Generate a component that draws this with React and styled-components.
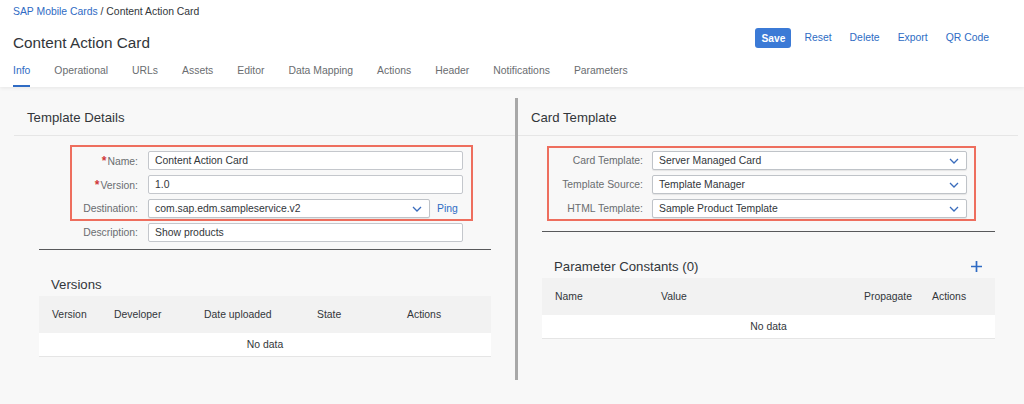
import React from "react";
import styled, { createGlobalStyle } from "styled-components";

const GlobalStyle = createGlobalStyle`
    html, body {
        margin: 0;
        padding: 0;
    }
    body {
        background: #f8f8f8;
        font-family: "Liberation Sans", Arial, sans-serif;
        color: #32363a;
    }
`

const tabs = ["Info", "Operational", "URLs", "Assets", "Editor", "Data Mapping", "Actions", "Header", "Notifications", "Parameters"]

function Chevron() {
    return (
        <svg width="10" height="6" viewBox="0 0 10 6">
            <path d="M1 1 L5 5 L9 1" fill="none" stroke="#3a6cbc" strokeWidth="1.3" />
        </svg>
    )
}

function PlusIcon() {
    return (
        <svg width="11" height="11" viewBox="0 0 11 11">
            <path d="M5.5 0 V11 M0 5.5 H11" stroke="#2f6bc4" strokeWidth="1.7" />
        </svg>
    )
}

function Field({ label, required, labelWidth, gap, fieldWidth, children }) {
    return (
        <FieldRow $labelWidth={labelWidth} $gap={gap} $fieldWidth={fieldWidth}>
            <Label>{required && <Required>*</Required>}{label}</Label>
            {children}
        </FieldRow>
    )
}

function SelectBox({ value, width }) {
    return (
        <Select $width={width}>
            <span>{value}</span>
            <Chevron />
        </Select>
    )
}

export default function App() {
    return (
        <>
            <GlobalStyle />
            <Header>
                <Breadcrumb>
                    <BreadcrumbLink>SAP Mobile Cards</BreadcrumbLink> / Content Action Card
                </Breadcrumb>
                <TitleRow>
                    <Title>Content Action Card</Title>
                    <HeaderActions>
                        <SaveButton>Save</SaveButton>
                        <LinkButton>Reset</LinkButton>
                        <LinkButton>Delete</LinkButton>
                        <LinkButton>Export</LinkButton>
                        <LinkButton>QR Code</LinkButton>
                    </HeaderActions>
                </TitleRow>
                <TabBar>
                    {tabs.map((tab, i) => (
                        <Tab key={tab} $active={i === 0}>{tab}</Tab>
                    ))}
                </TabBar>
            </Header>

            <Body>
                <Column $divider>
                    <SectionHeader>Template Details</SectionHeader>
                    <HighlightBox $left={56} $width={403} $top={9} $padding="4px 8px 1px 0">
                        <Field label="Name:" required labelWidth={66} gap={10} fieldWidth={315}>
                            <Input>Content Action Card</Input>
                        </Field>
                        <Field label="Version:" required labelWidth={66} gap={10} fieldWidth={315}>
                            <Input>1.0</Input>
                        </Field>
                        <Field label="Destination:" labelWidth={66} gap={10} fieldWidth={315}>
                            <FieldWithLink>
                                <SelectBox value="com.sap.edm.sampleservice.v2" width={282} />
                                <PingLink>Ping</PingLink>
                            </FieldWithLink>
                        </Field>
                    </HighlightBox>
                    <LooseRow>
                        <Field label="Description:" labelWidth={66} gap={10} fieldWidth={315}>
                            <Input>Show products</Input>
                        </Field>
                    </LooseRow>
                    <DarkRule $top={7} $left={25} $right={24} />

                    <SubHeading $left={25} $right={24}>
                        <span>Versions</span>
                    </SubHeading>
                    <Table $left={25} $right={24}>
                        <TableHead $columns="62px 90px 113px 90px 1fr">
                            <span>Version</span>
                            <span>Developer</span>
                            <span>Date uploaded</span>
                            <span>State</span>
                            <span>Actions</span>
                        </TableHead>
                        <EmptyRow>No data</EmptyRow>
                    </Table>
                </Column>

                <Column>
                    <SectionHeader>Card Template</SectionHeader>
                    <HighlightBox $left={29} $width={429} $top={10} $padding="3px 7px 1px 0">
                        <Field label="Card Template:" labelWidth={94} gap={9} fieldWidth={315}>
                            <SelectBox value="Server Managed Card" />
                        </Field>
                        <Field label="Template Source:" labelWidth={94} gap={9} fieldWidth={315}>
                            <SelectBox value="Template Manager" />
                        </Field>
                        <Field label="HTML Template:" labelWidth={94} gap={9} fieldWidth={315}>
                            <SelectBox value="Sample Product Template" />
                        </Field>
                    </HighlightBox>
                    <DarkRule $top={10} $left={24} $right={23} />

                    <SubHeading $left={24} $right={23}>
                        <span>Parameter Constants (0)</span>
                        <PlusIcon />
                    </SubHeading>
                    <Table $left={24} $right={23}>
                        <TableHead $columns="106px 203px 68px 1fr">
                            <span>Name</span>
                            <span>Value</span>
                            <span>Propagate</span>
                            <span>Actions</span>
                        </TableHead>
                        <EmptyRow>No data</EmptyRow>
                    </Table>
                </Column>
            </Body>
        </>
    )
}

const Header = styled.header`
    position: relative;
    z-index: 1;
    background: #ffffff;
    padding: 5px 35px 0 13px;
    box-shadow: 0 1px 4px rgba(0, 0, 0, 0.08);
`

const Breadcrumb = styled.div`
    font-size: 10.4px;
    line-height: 14px;
    color: #32363a;
`

const BreadcrumbLink = styled.span`
    color: #2f6bc4;
`

const TitleRow = styled.div`
    display: flex;
    justify-content: space-between;
    align-items: flex-start;
    margin-top: 9px;
`

const Title = styled.h1`
    margin: 6px 0 0;
    font-size: 15.3px;
    line-height: 18px;
    font-weight: normal;
    color: #32363a;
`

const HeaderActions = styled.div`
    display: flex;
    align-items: center;
    gap: 13px;
`

const SaveButton = styled.button`
    width: 36px;
    height: 20px;
    padding: 0;
    border: none;
    border-radius: 3px;
    background: #3b7ad6;
    color: #ffffff;
    font-family: inherit;
    font-size: 10.2px;
    font-weight: bold;
`

const LinkButton = styled.button`
    padding: 0;
    border: none;
    background: none;
    color: #2e6cc4;
    font-family: inherit;
    font-size: 10.4px;
    line-height: 20px;

    & + & {
        margin-left: 5px;
    }
`

const TabBar = styled.nav`
    display: flex;
    gap: 24px;
    margin-top: 12px;
`

const Tab = styled.div`
    font-size: 10.4px;
    line-height: 14px;
    padding-bottom: 7px;
    border-bottom: 2px solid ${p => p.$active ? "#2f6bc4" : "transparent"};
    color: ${p => p.$active ? "#2f6bc4" : "#6a6d70"};
`

const Body = styled.main`
    display: flex;
    align-items: stretch;
    padding: 11px 6px 0 14px;
`

const Column = styled.section`
    box-sizing: border-box;
    ${p => p.$divider
        ? `width: 504px; border-right: 3px solid #a8a8a8; padding-bottom: 23px;`
        : `flex: 1;`}
`

const SectionHeader = styled.h2`
    margin: 0;
    padding: 12px 13px 9px;
    font-size: 13.2px;
    line-height: 16px;
    font-weight: normal;
    color: #32363a;
    border-bottom: 1px solid #e6e6e6;
`

const HighlightBox = styled.div`
    box-sizing: border-box;
    width: ${p => p.$width}px;
    margin: ${p => p.$top}px 0 0 ${p => p.$left}px;
    padding: ${p => p.$padding};
    border: 2px solid #ee6e5e;
    display: grid;
    row-gap: 5px;
`

const LooseRow = styled.div`
    margin: 2px 0 0 58px;
`

const FieldRow = styled.div`
    display: grid;
    grid-template-columns: ${p => p.$labelWidth}px ${p => p.$fieldWidth}px;
    column-gap: ${p => p.$gap}px;
    align-items: center;
`

const Label = styled.label`
    text-align: right;
    font-size: 10.4px;
    color: #6a6d70;
    white-space: nowrap;
`

const Required = styled.span`
    color: #d0393a;
    font-size: 12px;
    font-weight: bold;
    margin-right: 1px;
`

const Input = styled.div`
    box-sizing: border-box;
    height: 19px;
    padding: 0 6px;
    display: flex;
    align-items: center;
    background: #ffffff;
    border: 1px solid #c4c7cc;
    border-radius: 2px;
    font-size: 10.4px;
    color: #32363a;
`

const Select = styled(Input)`
    justify-content: space-between;
    padding-right: 7px;
    width: ${p => p.$width ? `${p.$width}px` : "auto"};
    border-color: #bfc3c8;
    box-shadow: 0 1px 1px rgba(0, 0, 0, 0.08);
`

const FieldWithLink = styled.div`
    display: flex;
    align-items: center;
    gap: 7px;
`

const PingLink = styled.span`
    font-size: 10.4px;
    color: #2e6cc4;
`

const DarkRule = styled.hr`
    margin: ${p => p.$top}px ${p => p.$right}px 0 ${p => p.$left}px;
    border: none;
    border-top: 1px solid #58595b;
`

const SubHeading = styled.div`
    display: flex;
    justify-content: space-between;
    align-items: center;
    margin: 26px ${p => p.$right}px 0 ${p => p.$left}px;
    padding: 0 13px 0 12px;
    height: 16px;
    font-size: 13.2px;
    color: #32363a;
`

const Table = styled.div`
    margin: 4px ${p => p.$right}px 0 ${p => p.$left}px;
`

const TableHead = styled.div`
    display: grid;
    grid-template-columns: ${p => p.$columns};
    align-items: center;
    height: 37px;
    padding-left: 13px;
    background: #f2f2f2;
    font-size: 10.4px;
    color: #32363a;
`

const EmptyRow = styled.div`
    height: 23px;
    line-height: 23px;
    background: #ffffff;
    border-bottom: 1px solid #e5e5e5;
    text-align: center;
    font-size: 10.4px;
    color: #32363a;
`
